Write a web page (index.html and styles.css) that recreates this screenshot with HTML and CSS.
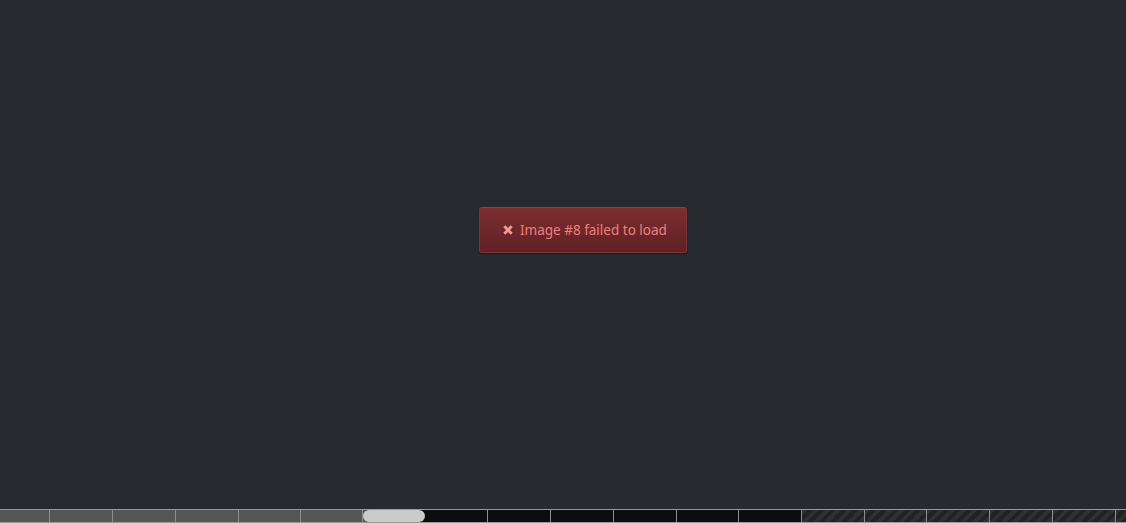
FILE: index.html
```html
<!DOCTYPE html>
<html>
<head>
<meta charset="utf-8">
<link rel="stylesheet" href="styles.css">
</head>
<body>
<div class="stage">
  <div class="toast">
    <svg class="x" width="10" height="10" viewBox="0 0 10 10"><path d="M1.3 1.3 L8.7 8.7 M8.7 1.3 L1.3 8.7" stroke="currentColor" stroke-width="2.8" stroke-linecap="butt"/></svg>
    <span>Image #8 failed to load</span>
  </div>
</div>
<div class="bar">
  <div class="seg done" style="width:50px"></div>
  <div class="seg done" style="width:63px"></div>
  <div class="seg done" style="width:63px"></div>
  <div class="seg done" style="width:63px"></div>
  <div class="seg done" style="width:62px"></div>
  <div class="seg done" style="width:62px"></div>
  <div class="seg current" style="width:63px"><div class="thumb"></div></div>
  <div class="seg pending" style="width:62px"></div>
  <div class="seg pending" style="width:63px"></div>
  <div class="seg pending" style="width:63px"></div>
  <div class="seg pending" style="width:63px"></div>
  <div class="seg pending" style="width:62px"></div>
  <div class="seg pending" style="width:63px"></div>
  <div class="seg failed" style="width:63px"></div>
  <div class="seg failed" style="width:62px"></div>
  <div class="seg failed" style="width:63px"></div>
  <div class="seg failed" style="width:63px"></div>
  <div class="seg failed" style="width:63px"></div>
  <div class="seg failed last"></div>
</div>
</body>
</html>
```
FILE: styles.css
```css
html, body {
  margin: 0;
  padding: 0;
  height: 100%;
  background: #272a2e;
  overflow: hidden;
}
body {
  display: flex;
  flex-direction: column;
  font-family: "Noto Sans", "Open Sans", sans-serif;
}
.stage {
  flex: 1;
  padding-top: 207px;
  padding-left: 479px;
}
.toast {
  display: inline-flex;
  align-items: center;
  box-sizing: border-box;
  width: 208px;
  height: 46px;
  padding-left: 23px;
  gap: 7px;
  border: 1px solid #7f3334;
  border-top-color: #94403f;
  border-radius: 3px;
  background: linear-gradient(#7d2d2f, #5f2024);
  color: #ec807c;
  font-size: 13.5px;
  box-shadow: 0 1px 2px rgba(0,0,0,0.35);
}
.x {
  color: #f09a98;
  flex: none;
}
.bar {
  display: flex;
  height: 12px;
  border-top: 1px solid #9a9a9a;
  border-bottom: 1px solid #9a9a9a;
  background: #9a9a9a;
}
.seg {
  flex: none;
  box-sizing: border-box;
  border-right: 1px solid #8e8e8e;
  height: 12px;
}
.done { background: #565656; }
.current {
  background: linear-gradient(90deg, #565656 50%, #0c0d0f 50%);
  position: relative;
  border-right-color: #0c0d0f;
}
.thumb {
  position: absolute;
  left: 0;
  right: 0;
  top: 0;
  bottom: 0;
  background: #cbcbcb;
  border-radius: 6px;
}
.pending { background: #0c0d0f; }
.failed {
  background: repeating-linear-gradient(135deg, #2f3032 0 4px, #212224 4px 8px);
}
.last {
  flex: 1;
  border-right: none;
}
```
